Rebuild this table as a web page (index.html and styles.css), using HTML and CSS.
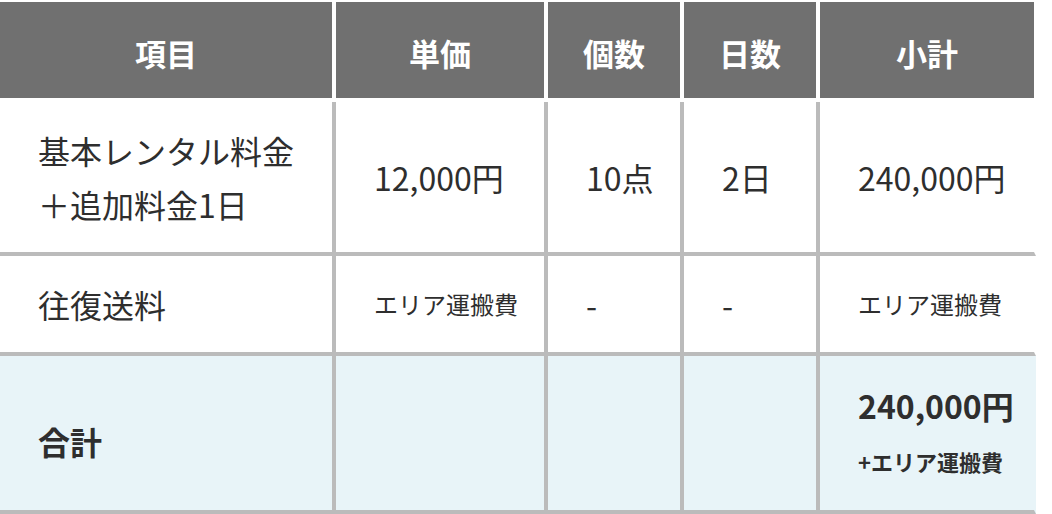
FILE: index.html
```html
<!DOCTYPE html>
<html lang="ja">
<head>
<meta charset="utf-8">
<title>料金表</title>
<link rel="stylesheet" href="styles.css">
</head>
<body>
<table class="price-table">
  <thead>
    <tr class="head-row">
      <th class="col-item">項目</th>
      <th class="col-unit">単価</th>
      <th class="col-qty">個数</th>
      <th class="col-days">日数</th>
      <th class="col-sub">小計</th>
    </tr>
  </thead>
  <tbody>
    <tr class="row-main">
      <td>基本レンタル料金<br>＋追加料金1日</td>
      <td>12,000円</td>
      <td>10点</td>
      <td>2日</td>
      <td>240,000円</td>
    </tr>
    <tr class="row-ship">
      <td>往復送料</td>
      <td class="small">エリア運搬費</td>
      <td>-</td>
      <td>-</td>
      <td class="small">エリア運搬費</td>
    </tr>
    <tr class="row-total">
      <td class="total-label">合計</td>
      <td></td>
      <td></td>
      <td></td>
      <td class="total-value"><span class="total-amount">240,000円</span><span class="total-note">+エリア運搬費</span></td>
    </tr>
  </tbody>
</table>
</body>
</html>
```

FILE: styles.css
```css
html, body {
  margin: 0;
  padding: 0;
  background: #ffffff;
}

body {
  font-family: "Noto Sans CJK JP", "Noto Sans", sans-serif;
  color: #2e2e2e;
}

.price-table {
  margin-top: 2px;
  width: 1036px;
  border-collapse: separate;
  border-spacing: 0;
  table-layout: fixed;
}

.price-table th {
  box-sizing: border-box;
  background: #707070;
  color: #ffffff;
  font-weight: 700;
  font-size: 31px;
  line-height: 1.5;
  text-align: center;
  padding: 6px 0 0;
  border-right: 4px solid #ffffff;
  border-bottom: 4px solid #ffffff;
}

.price-table th:last-child {
  border-right: 2px solid #ffffff;
}

.col-item { width: 336px; }
.col-unit { width: 212px; }
.col-qty { width: 136px; }
.col-days { width: 136px; }
.col-sub { width: 216px; }

.head-row { height: 100px; }
.row-main { height: 154px; }
.row-ship { height: 100px; }
.row-total { height: 158px; }

.price-table td {
  box-sizing: border-box;
  font-size: 32px;
  font-weight: 400;
  line-height: 1.7;
  text-align: left;
  vertical-align: middle;
  padding: 0 0 0 38px;
  border-right: 4px solid #bbbbbb;
  border-bottom: 4px solid #bbbbbb;
  white-space: nowrap;
}

.price-table td:last-child {
  border-right: 2px solid #ffffff;
}

.price-table td.small {
  font-size: 24px;
}

.row-total td {
  background: #e8f4f8;
}

.row-total td:last-child {
  border-right-color: #e8f4f8;
}

.total-label {
  font-weight: 700 !important;
  padding-top: 16px !important;
}

.total-amount {
  display: block;
  font-weight: 700;
  font-size: 32px;
  line-height: 56px;
}

.total-note {
  display: block;
  font-weight: 700;
  font-size: 22px;
  line-height: 56px;
}
```
